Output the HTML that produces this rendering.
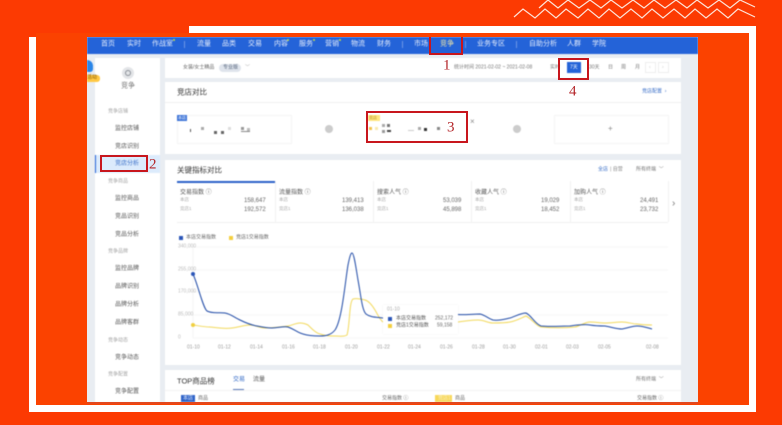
<!DOCTYPE html>
<html lang="zh"><head><meta charset="utf-8"><style>
html,body{margin:0;padding:0}
body{width:782px;height:425px;overflow:hidden;position:relative;background:#fc3a02;font-family:"Liberation Sans","Noto Sans CJK SC",sans-serif;color:#444}
.b{position:absolute}
.t{position:absolute;white-space:nowrap;line-height:1;font-size:6px;transform:translateY(-50%)}
#shot{position:absolute;left:87px;top:37px;width:611px;height:365px;overflow:hidden;background:#e9edf2}
#s2{position:absolute;left:-87px;top:-37px;width:782px;height:425px;filter:blur(.4px)}
.n{color:#e6eefc;font-size:7px}
.c{background:#fff;position:absolute}
.l{color:#a5a5a5;font-size:5px}
.m{color:#555;font-size:6px}
.g{color:#aaa;font-size:4.5px}
.v{color:#666;font-size:6px;text-align:right;right:auto}
.r{position:absolute;border:2px solid #c8161d;box-sizing:border-box}
.z{position:absolute;color:#b4262a;font-family:"Liberation Serif",serif;font-size:15px;line-height:1;transform:translateY(-50%)}
.x{color:#999;font-size:5px}
.d{position:absolute;width:2px;height:2px;border-radius:50%;background:#c5e04a}
</style></head><body>
<div class="b" style="left:36px;top:33px;width:713px;height:372px;background:#fb4200"></div>
<div class="b" style="left:189px;top:26px;width:567px;height:7px;background:#fff"></div>
<div class="b" style="left:749px;top:26px;width:7px;height:386px;background:#fff"></div>
<div class="b" style="left:29px;top:405px;width:727px;height:7px;background:#fff"></div>
<div class="b" style="left:29px;top:37px;width:7px;height:375px;background:#fff"></div>
<svg class="b" style="left:0;top:0" width="782" height="40" fill="none" stroke="#fde3d8" stroke-width="1.2">
<polyline points="514,17 523,9 535,18 545,9 556,18 566,9 578,18 588,9 599,18 609,9 620,18 631,9 642,18 652,9 663,18 674,9 685,18 695,9 706,18 717,9 728,18 738,9 755,17"/>
<polyline points="539,8 548,0 558,8 568,0 579,8 590,0 601,8 611,0 622,8 633,0 644,8 654,0 665,8 676,0 687,8 697,0 708,8 719,0 730,8 740,0 755,7"/>
</svg>
<div id="shot"><div id="s2">
<div class="b" style="left:87px;top:37px;width:611px;height:17px;background:#2463d8"></div>
<span class="t n" style="left:101px;top:44px">首页</span><span class="t n" style="left:127px;top:44px">实时</span><span class="t n" style="left:152px;top:44px">作战室</span>
<span class="t n" style="left:197px;top:44px">流量</span><span class="t n" style="left:222px;top:44px">品类</span><span class="t n" style="left:248px;top:44px">交易</span><span class="t n" style="left:274px;top:44px">内容</span><span class="t n" style="left:299px;top:44px">服务</span><span class="t n" style="left:325px;top:44px">营销</span><span class="t n" style="left:351px;top:44px">物流</span><span class="t n" style="left:377px;top:44px">财务</span>
<span class="t n" style="left:414px;top:44px">市场</span><span class="t n" style="left:440px;top:44px;color:#f3e9a5">竞争</span><span class="t n" style="left:477px;top:44px">业务专区</span><span class="t n" style="left:529px;top:44px">自助分析</span><span class="t n" style="left:567px;top:44px">人群</span><span class="t n" style="left:592px;top:44px">学院</span>
<div class="d" style="left:173px;top:39px"></div><div class="d" style="left:287px;top:39px"></div><div class="d" style="left:313px;top:39px"></div><div class="d" style="left:339px;top:39px"></div>
<div class="b" style="left:184px;top:41px;width:1px;height:7px;background:#6d97e6"></div>
<div class="b" style="left:402px;top:41px;width:1px;height:7px;background:#6d97e6"></div>
<div class="b" style="left:465px;top:41px;width:1px;height:7px;background:#6d97e6"></div>
<div class="b" style="left:516px;top:41px;width:1px;height:7px;background:#6d97e6"></div>

<div class="c" style="left:95px;top:58px;width:65px;height:344px"></div>
<div class="b" style="left:87px;top:60px;width:6px;height:12px;background:#2b86e8;border-radius:0 6px 3px 0"></div>
<div class="b" style="left:87px;top:75px;width:13px;height:7px;background:#ffc843;border-radius:0 3px 3px 0"></div>
<span class="t" style="left:87px;top:78px;font-size:5px;color:#8a5a00">活动</span>
<div class="b" style="left:122px;top:67px;width:12px;height:12px;border-radius:50%;background:#e3e5e8"></div>
<div class="b" style="left:125px;top:70px;width:6px;height:6px;border-radius:50%;border:1px solid #8a8f96;box-sizing:border-box"></div>
<span class="t" style="left:121px;top:86px;font-size:7px;color:#777">竞争</span>
<span class="t l" style="left:108px;top:112px">竞争店铺</span>
<span class="t m" style="left:115px;top:129px">监控店铺</span>
<span class="t m" style="left:115px;top:147px">竞店识别</span>
<div class="b" style="left:95px;top:155px;width:65px;height:18px;background:#dcebfc"></div>
<div class="b" style="left:95px;top:155px;width:1px;height:18px;background:#2463d8"></div>
<span class="t m" style="left:115px;top:164px;color:#3a6fc8">竞店分析</span>
<span class="t l" style="left:108px;top:182px">竞争商品</span>
<span class="t m" style="left:115px;top:199px">监控商品</span>
<span class="t m" style="left:115px;top:217px">竞品识别</span>
<span class="t m" style="left:115px;top:235px">竞品分析</span>
<span class="t l" style="left:108px;top:252px">竞争品牌</span>
<span class="t m" style="left:115px;top:269px">监控品牌</span>
<span class="t m" style="left:115px;top:287px">品牌识别</span>
<span class="t m" style="left:115px;top:305px">品牌分析</span>
<span class="t m" style="left:115px;top:323px">品牌客群</span>
<span class="t l" style="left:108px;top:341px">竞争动态</span>
<span class="t m" style="left:115px;top:358px">竞争动态</span>
<span class="t l" style="left:108px;top:375px">竞争配置</span>
<span class="t m" style="left:115px;top:392px">竞争配置</span>

<div class="c" style="left:165px;top:58px;width:516px;height:20px"></div>
<span class="t" style="left:183px;top:68px;font-size:5px;color:#666">女装/女士精品</span>
<div class="b" style="left:219px;top:64px;width:22px;height:8px;border-radius:4px;background:#dfe4ec"></div>
<span class="t" style="left:223px;top:68px;font-size:5px;color:#5c6a80">专业版</span>
<span class="t x" style="left:245px;top:68px">﹀</span>
<span class="t" style="left:454px;top:68px;font-size:5px;color:#777">统计时间 2021-02-02 ~ 2021-02-08</span>
<span class="t" style="left:550px;top:68px;font-size:5px;color:#777">实时</span>
<div class="b" style="left:567px;top:62px;width:14px;height:11px;background:#2463d8"></div>
<span class="t" style="left:570px;top:68px;font-size:5px;color:#fff">7天</span>
<span class="t" style="left:589px;top:68px;font-size:5px;color:#777">30天</span>
<span class="t" style="left:608px;top:68px;font-size:5px;color:#777">日</span><span class="t" style="left:621px;top:68px;font-size:5px;color:#777">周</span><span class="t" style="left:635px;top:68px;font-size:5px;color:#777">月</span>
<div class="b" style="left:645px;top:62px;width:11px;height:11px;border:1px solid #eee;box-sizing:border-box"></div><div class="b" style="left:658px;top:62px;width:11px;height:11px;border:1px solid #eee;box-sizing:border-box"></div>
<span class="t x" style="left:649px;top:68px;color:#ccc">‹</span><span class="t x" style="left:662px;top:68px;color:#ccc">›</span>

<div class="c" style="left:165px;top:82px;width:516px;height:72px"></div>
<span class="t" style="left:177px;top:92px;font-size:7.5px;color:#333">竞店对比</span>
<div class="b" style="left:165px;top:102px;width:516px;height:1px;background:#f0f0f0"></div>
<span class="t" style="left:642px;top:92px;font-size:5px;color:#3a6fc8">竞店配置 &nbsp;›</span>
<div class="b" style="left:177px;top:115px;width:115px;height:29px;border:1px solid #f4f4f4;box-sizing:border-box"></div>
<div class="b" style="left:177px;top:115px;width:10px;height:6px;background:#3d74d8"></div>
<span class="t" style="left:178px;top:118px;font-size:4px;color:#fff">本店</span>
<div class="b" style="left:190px;top:129px;width:1px;height:3px;background:#555"></div>
<div class="b" style="left:201px;top:127px;width:3px;height:3px;background:#aaa"></div>
<div class="b" style="left:214px;top:131px;width:3px;height:3px;background:#666"></div><div class="b" style="left:221px;top:131px;width:3px;height:3px;background:#666"></div>
<div class="b" style="left:228px;top:127px;width:3px;height:3px;background:#ddd"></div>
<div class="b" style="left:241px;top:127px;width:3px;height:3px;background:#999"></div><div class="b" style="left:241px;top:131px;width:9px;height:1px;background:#888"></div><div class="b" style="left:247px;top:128px;width:3px;height:3px;background:#bbb"></div>
<div class="b" style="left:325px;top:125px;width:8px;height:8px;border-radius:50%;background:#ccc"></div>
<div class="b" style="left:368px;top:115px;width:12px;height:6px;background:#ffe680"></div>
<span class="t" style="left:369px;top:118px;font-size:4px;color:#b8952a">竞店</span>
<div class="b" style="left:369px;top:127px;width:3px;height:3px;background:#f1c44d"></div><div class="b" style="left:375px;top:127px;width:3px;height:3px;background:#f8e9b0"></div>
<div class="b" style="left:382px;top:124px;width:3px;height:3px;background:#aaa"></div><div class="b" style="left:387px;top:124px;width:3px;height:3px;background:#777"></div><div class="b" style="left:382px;top:130px;width:3px;height:3px;background:#999"></div><div class="b" style="left:387px;top:130px;width:4px;height:2px;background:#444"></div>
<div class="b" style="left:408px;top:130px;width:6px;height:1px;background:#ccc"></div>
<div class="b" style="left:418px;top:127px;width:3px;height:3px;background:#aaa"></div><div class="b" style="left:424px;top:128px;width:3px;height:3px;background:#333"></div><div class="b" style="left:437px;top:127px;width:3px;height:3px;background:#888"></div>
<span class="t" style="left:470px;top:122px;font-size:8px;color:#888">×</span>
<div class="b" style="left:513px;top:125px;width:8px;height:8px;border-radius:50%;background:#ccc"></div>
<div class="b" style="left:554px;top:115px;width:115px;height:29px;border:1px solid #f4f4f4;box-sizing:border-box"></div>
<span class="t" style="left:608px;top:129px;font-size:8px;color:#888">+</span>

<div class="c" style="left:165px;top:160px;width:516px;height:205px"></div>
<span class="t" style="left:177px;top:170px;font-size:7.5px;color:#333">关键指标对比</span>
<span class="t" style="left:598px;top:170px;font-size:5px;color:#3a6fc8">全店</span><span class="t" style="left:610px;top:170px;font-size:5px;color:#888">| 自营</span><span class="t" style="left:636px;top:170px;font-size:5px;color:#777">所有终端 &nbsp;﹀</span>
<div class="b" style="left:177px;top:181px;width:98px;height:1.5px;background:#2b62c8"></div>
<div class="b" style="left:177px;top:222px;width:491px;height:1px;background:#f0f0f0"></div>
<div class="b" style="left:275px;top:181px;width:1px;height:41px;background:#f2f2f2"></div><div class="b" style="left:373px;top:181px;width:1px;height:41px;background:#f2f2f2"></div><div class="b" style="left:471px;top:181px;width:1px;height:41px;background:#f2f2f2"></div><div class="b" style="left:570px;top:181px;width:1px;height:41px;background:#f2f2f2"></div><div class="b" style="left:668px;top:181px;width:1px;height:41px;background:#f2f2f2"></div>
<span class="t" style="left:180px;top:193px;font-size:6px;color:#555">交易指数 ⓘ</span><span class="t g" style="left:180px;top:200px">本店</span><span class="t g" style="left:180px;top:209px">竞店1</span><span class="t v" style="left:244px;top:201px">158,647</span><span class="t v" style="left:244px;top:210px">192,572</span>
<span class="t" style="left:279px;top:193px;font-size:6px;color:#555">流量指数 ⓘ</span><span class="t g" style="left:279px;top:200px">本店</span><span class="t g" style="left:279px;top:209px">竞店1</span><span class="t v" style="left:342px;top:201px">139,413</span><span class="t v" style="left:342px;top:210px">136,038</span>
<span class="t" style="left:377px;top:193px;font-size:6px;color:#555">搜索人气 ⓘ</span><span class="t g" style="left:377px;top:200px">本店</span><span class="t g" style="left:377px;top:209px">竞店1</span><span class="t v" style="left:443px;top:201px">53,039</span><span class="t v" style="left:443px;top:210px">45,898</span>
<span class="t" style="left:475px;top:193px;font-size:6px;color:#555">收藏人气 ⓘ</span><span class="t g" style="left:475px;top:200px">本店</span><span class="t g" style="left:475px;top:209px">竞店1</span><span class="t v" style="left:541px;top:201px">19,029</span><span class="t v" style="left:541px;top:210px">18,452</span>
<span class="t" style="left:574px;top:193px;font-size:6px;color:#555">加购人气 ⓘ</span><span class="t g" style="left:574px;top:200px">本店</span><span class="t g" style="left:574px;top:209px">竞店1</span><span class="t v" style="left:640px;top:201px">24,491</span><span class="t v" style="left:640px;top:210px">23,732</span>
<span class="t" style="left:672px;top:204px;font-size:10px;color:#777">›</span>
<div class="b" style="left:179px;top:236px;width:4px;height:4px;background:#2b56b8"></div><span class="t" style="left:186px;top:238px;font-size:5px;color:#666">本店交易指数</span>
<div class="b" style="left:229px;top:236px;width:4px;height:4px;background:#f4cf3f"></div><span class="t" style="left:236px;top:238px;font-size:5px;color:#666">竞店1交易指数</span>

<svg class="b" style="left:0;top:0" width="782" height="425" fill="none">
<g stroke="#f5f5f5" stroke-width=".7"><path d="M193 247H668M193 270H668M193 292H668M193 315H668M193 338H668"/></g>
<path d="M193 247V338" stroke="#eee" stroke-width=".6"/>
<path d="M193 325C200 326 205 327 210 327C218 328 225 329 232 328C240 327 244 325 250 325C256 325 259 328 265 328C272 328 280 327 288 326C293 325 296 323 300 323C304 323 306 324 308 325C312 329 316 333 320 334C326 336 330 336 335 336C340 336 344 337 347 335C350 325 349 302 353 299C357 298 361 299 365 300C369 301 372 305 375 310C378 315 380 320 383 322" stroke="#f2d95c" stroke-width="1"/>
<path d="M193 274C198 285 203 308 207 311C213 314 219 312 225 313C231 314 235 318 240 320C246 323 251 325 257 326C262 327 267 328 272 328C278 328 284 326 288 327C294 329 298 333 303 334C309 336 315 336 320 336C326 336 331 335 335 330C342 320 345 283 348 265C350 255 351 253 352 253C354 253 356 268 358 280C361 296 362 310 366 314C371 318 378 317 383 318" stroke="#1f4aa6" stroke-width="1"/>
<path d="M458 322C465 321 472 320 478 320C484 320 488 323 493 323C499 323 505 323 510 322C516 321 521 318 526 316C532 319 536 326 541 327C552 328 565 328 575 327C580 326 585 322 590 322C595 322 600 323 605 323C611 323 617 322 622 322C628 322 632 324 637 324C643 325 648 325 652 325" stroke="#f2d95c" stroke-width="1"/>
<path d="M458 314.500C465 315 473 314 480 314C485 315 489 319 493 320C499 321 505 319 510 318C516 316 521 313 526 313C531 315 535 324 541 326C550 327 561 326 570 326C578 325 584 324 590 325C596 326 600 326 605 326C611 327 617 329 622 329C628 328 632 326 637 326C643 326 648 328 652 329" stroke="#1f4aa6" stroke-width="1"/>
<circle cx="193" cy="274" r="2" fill="#2b56b8"/><circle cx="193" cy="325" r="2" fill="#f0cf3f"/>
</svg>
<span class="t" style="left:178px;top:247px;font-size:5px;color:#bbb">340,000</span>
<span class="t" style="left:178px;top:270px;font-size:5px;color:#bbb">255,000</span>
<span class="t" style="left:178px;top:292px;font-size:5px;color:#bbb">170,000</span>
<span class="t" style="left:178px;top:315px;font-size:5px;color:#bbb">85,000</span>
<span class="t" style="left:178px;top:338px;font-size:5px;color:#bbb">0</span>
<span class="t x" style="left:187px;top:348px">01-10</span><span class="t x" style="left:218px;top:348px">01-12</span><span class="t x" style="left:250px;top:348px">01-14</span><span class="t x" style="left:282px;top:348px">01-16</span><span class="t x" style="left:313px;top:348px">01-18</span><span class="t x" style="left:345px;top:348px">01-20</span><span class="t x" style="left:377px;top:348px">01-22</span><span class="t x" style="left:408px;top:348px">01-24</span><span class="t x" style="left:440px;top:348px">01-26</span><span class="t x" style="left:472px;top:348px">01-28</span><span class="t x" style="left:503px;top:348px">01-30</span><span class="t x" style="left:535px;top:348px">02-01</span><span class="t x" style="left:566px;top:348px">02-03</span><span class="t x" style="left:598px;top:348px">02-05</span><span class="t x" style="left:646px;top:348px">02-08</span>
<div class="b" style="left:383px;top:305px;width:75px;height:29px;background:#fff;box-shadow:0 0 3px rgba(0,0,0,.05)"></div>
<span class="t" style="left:387px;top:310px;font-size:5px;color:#aaa">01-10</span>
<div class="b" style="left:388px;top:317px;width:3.500px;height:3.500px;background:#2b56b8"></div><span class="t" style="left:396px;top:319px;font-size:5px;color:#555">本店交易指数</span><span class="t" style="left:435px;top:319px;font-size:5px;color:#666">252,172</span>
<div class="b" style="left:388px;top:324px;width:3.500px;height:3.500px;background:#f4cf3f"></div><span class="t" style="left:396px;top:326px;font-size:5px;color:#555">竞店1交易指数</span><span class="t" style="left:437px;top:326px;font-size:5px;color:#666">59,158</span>

<div class="c" style="left:165px;top:370px;width:516px;height:32px"></div>
<span class="t" style="left:177px;top:381px;font-size:7.5px;color:#333">TOP商品榜</span>
<span class="t" style="left:233px;top:380px;font-size:6px;color:#3a6fc8">交易</span><span class="t" style="left:253px;top:380px;font-size:6px;color:#555">流量</span>
<div class="b" style="left:233px;top:389px;width:11px;height:1px;background:#5a7ab8"></div>
<div class="b" style="left:165px;top:390px;width:516px;height:1px;background:#f3f3f3"></div>
<span class="t" style="left:636px;top:380px;font-size:5px;color:#777">所有终端 &nbsp;﹀</span>
<div class="b" style="left:181px;top:395px;width:14px;height:7px;background:#2f63c8"></div><span class="t" style="left:183px;top:399px;font-size:5px;color:#dfe9fb">本店</span><span class="t" style="left:198px;top:399px;font-size:5px;color:#666">商品</span>
<span class="t" style="left:382px;top:399px;font-size:5px;color:#666">交易指数 ⓘ</span>
<div class="b" style="left:435px;top:395px;width:17px;height:7px;background:#f8d85a"></div><span class="t" style="left:438px;top:399px;font-size:5px;color:#f8efc0">竞店1</span><span class="t" style="left:455px;top:399px;font-size:5px;color:#666">商品</span>
<span class="t" style="left:637px;top:399px;font-size:5px;color:#666">交易指数 ⓘ</span>
</div></div>
<div class="b" style="left:87px;top:402px;width:611px;height:1.5px;background:#e2481e"></div>
<div class="r" style="left:429px;top:37px;width:34px;height:18px;border-top:0"></div>
<div class="r" style="left:558px;top:58px;width:31px;height:22px"></div>
<div class="r" style="left:100px;top:155px;width:48px;height:17px"></div>
<div class="r" style="left:366px;top:111px;width:102px;height:32px"></div>
<span class="z" style="left:443px;top:66px">1</span><span class="z" style="left:149px;top:165px">2</span><span class="z" style="left:447px;top:128px">3</span><span class="z" style="left:569px;top:92px">4</span>
</body></html>
